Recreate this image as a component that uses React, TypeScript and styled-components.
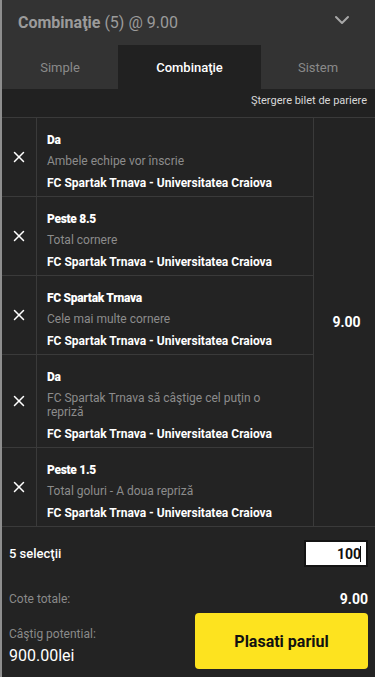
import React from "react";
import styled, { createGlobalStyle } from "styled-components";
import { ChevronDown, X } from "lucide-react";

const GlobalStyle = createGlobalStyle`
  * { box-sizing: border-box; }
  body {
    margin: 0;
    background: #232323;
    font-family: Roboto, "Liberation Sans", Arial, sans-serif;
  }
`;

const Slip = styled.div`
  display: flex;
  flex-direction: column;
  width: 375px;
  height: 677px;
  background: #232323;
  border-left: 2px solid #8e8e8e;
  color: #fff;

  & > * {
    flex-shrink: 0;
  }
`;

const Header = styled.div`
  height: 45px;
  display: flex;
  align-items: center;
  justify-content: space-between;
  padding: 0 21px 0 16px;
  background: #333333;
  color: #9b9b9b;
  font-size: 16px;
`;

const HeaderTitle = styled.div`
  b {
    font-weight: 700;
  }
`;

const Chevron = styled(ChevronDown)`
  margin-bottom: 6px;
`;

const Tabs = styled.div`
  display: grid;
  grid-template-columns: 116px 143px 1fr;
  height: 44px;
  background: #333333;
`;

const Tab = styled.div<{ active?: boolean }>`
  display: flex;
  align-items: center;
  justify-content: center;
  font-size: 13px;
  font-weight: ${(p) => (p.active ? 500 : 400)};
  color: ${(p) => (p.active ? "#ffffff" : "#8a8a8a")};
  background: ${(p) => (p.active ? "#212121" : "transparent")};
`;

const ClearRow = styled.div`
  height: 29px;
  padding: 4px 8px 0 0;
  text-align: right;
  font-size: 11px;
  line-height: 16px;
  color: #d8d8d8;
  background: #212121;
  border-bottom: 1px solid #3a3a3a;
`;

const Selections = styled.div`
  display: grid;
  grid-template-columns: 312px 1fr;
  border-bottom: 1px solid #3a3a3a;
`;

const SelectionList = styled.div`
  display: flex;
  flex-direction: column;
  border-right: 1px solid #3a3a3a;
`;

const SelectionRow = styled.div`
  display: grid;
  grid-template-columns: 35px minmax(0, 1fr);
  border-bottom: 1px solid #3a3a3a;

  &:last-child {
    border-bottom: none;
  }
`;

const RemoveCell = styled.div`
  display: flex;
  align-items: center;
  justify-content: center;
  border-right: 1px solid #3a3a3a;
  color: #ffffff;
`;

const Details = styled.div`
  padding: 13px 30px 4px 10px;
  font-size: 12px;
`;

const Pick = styled.div`
  font-weight: 900;
  letter-spacing: -0.3px;
  line-height: 18px;
`;

const Market = styled.div`
  margin-top: 5px;
  line-height: 14px;
  color: #8c8c8c;
`;

const Match = styled.div`
  margin-top: 6px;
  font-weight: 700;
  line-height: 18px;
`;

const OddsCell = styled.div`
  display: flex;
  align-items: center;
  justify-content: center;
  padding-left: 4px;
  font-size: 14px;
  font-weight: 700;
`;

const Footer = styled.div`
  flex: 1;
  padding: 13px 7px 7px 7px;
`;

const StakeRow = styled.div`
  display: flex;
  align-items: center;
  justify-content: space-between;
  height: 27px;
`;

const SelectionCount = styled.div`
  font-size: 13px;
  font-weight: 500;
`;

const StakeBox = styled.div`
  width: 64px;
  height: 27px;
  display: flex;
  align-items: center;
  justify-content: flex-end;
  padding-right: 5px;
  background: #ffffff;
  border: 2px solid #141414;
  color: #111111;
  font-size: 14px;
  font-weight: 700;

  &::after {
    content: "";
    width: 1px;
    height: 16px;
    margin-left: -1px;
    background: #111111;
  }
`;

const TotalRow = styled.div`
  display: flex;
  align-items: center;
  justify-content: space-between;
  height: 18px;
  margin-top: 23px;
`;

const Label = styled.div`
  font-size: 12px;
  line-height: 18px;
  color: #8a8a8a;
`;

const TotalOdds = styled.div`
  font-size: 14px;
  font-weight: 700;
`;

const PayoutRow = styled.div`
  display: flex;
  justify-content: space-between;
  margin-top: 5px;
`;

const Payout = styled.div`
  padding-top: 12px;
`;

const PayoutValue = styled.div`
  margin-top: 2px;
  font-size: 16px;
  line-height: 22px;
`;

const PlaceButton = styled.button`
  width: 173px;
  height: 56px;
  border: none;
  border-radius: 4px;
  background: #fde31f;
  color: #111111;
  font-family: inherit;
  font-size: 16px;
  font-weight: 700;
`;

const selections = [
  { pick: "Da", market: "Ambele echipe vor înscrie" },
  { pick: "Peste 8.5", market: "Total cornere" },
  { pick: "FC Spartak Trnava", market: "Cele mai multe cornere" },
  { pick: "Da", market: "FC Spartak Trnava să câştige cel puţin o repriză" },
  { pick: "Peste 1.5", market: "Total goluri - A doua repriză" },
];

export default function App() {
  return (
    <>
      <GlobalStyle />
      <Slip>
        <Header>
          <HeaderTitle>
            <b>Combinaţie</b> (5) @ 9.00
          </HeaderTitle>
          <Chevron size={24} strokeWidth={2} color="#a8a8a8" />
        </Header>
        <Tabs>
          <Tab>Simple</Tab>
          <Tab active>Combinaţie</Tab>
          <Tab>Sistem</Tab>
        </Tabs>
        <ClearRow>Ştergere bilet de pariere</ClearRow>
        <Selections>
          <SelectionList>
            {selections.map((s, i) => (
              <SelectionRow key={i}>
                <RemoveCell>
                  <X size={18} strokeWidth={2} />
                </RemoveCell>
                <Details>
                  <Pick>{s.pick}</Pick>
                  <Market>{s.market}</Market>
                  <Match>FC Spartak Trnava - Universitatea Craiova</Match>
                </Details>
              </SelectionRow>
            ))}
          </SelectionList>
          <OddsCell>9.00</OddsCell>
        </Selections>
        <Footer>
          <StakeRow>
            <SelectionCount>5 selecţii</SelectionCount>
            <StakeBox>100</StakeBox>
          </StakeRow>
          <TotalRow>
            <Label>Cote totale:</Label>
            <TotalOdds>9.00</TotalOdds>
          </TotalRow>
          <PayoutRow>
            <Payout>
              <Label>Câştig potential:</Label>
              <PayoutValue>900.00lei</PayoutValue>
            </Payout>
            <PlaceButton>Plasati pariul</PlaceButton>
          </PayoutRow>
        </Footer>
      </Slip>
    </>
  );
}
